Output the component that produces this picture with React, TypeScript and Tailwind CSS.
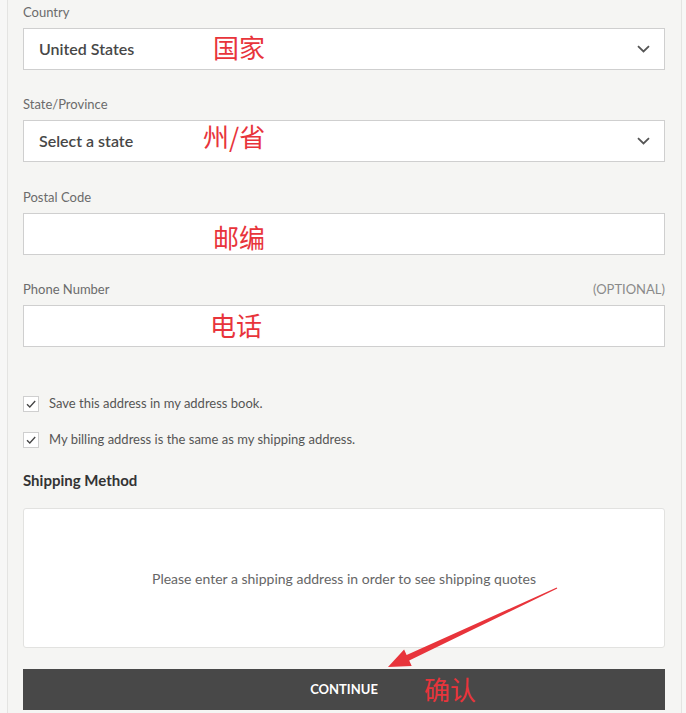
import React from 'react';

const labelCls = 'block text-[13px] leading-4 text-[#6b6b6b]';
const boxCls = 'h-[42px] w-full border border-[#cfcfcf] bg-white';

function Chevron() {
  return (
    <svg width="13" height="8" viewBox="0 0 13 8" fill="none" className="text-[#555]">
      <path d="M1 1.2 L6.5 6.5 L12 1.2" stroke="currentColor" strokeWidth="1.8" />
    </svg>
  );
}

function SelectField({ label, value, gap = 'mb-[26px]' }: { label: string; value: string; gap?: string }) {
  return (
    <div className={gap}>
      <label className={labelCls}>{label}</label>
      <div className={`${boxCls} mt-2 flex items-center justify-between pl-[15px] pr-[14px]`}>
        <span className="text-[16px] font-semibold text-[#474747]">{value}</span>
        <Chevron />
      </div>
    </div>
  );
}

function InputField({ label, optional }: { label: string; optional?: boolean }) {
  return (
    <div className="mb-[26px]">
      <div className="flex justify-between">
        <label className={labelCls}>{label}</label>
        {optional && <span className="text-[13px] leading-4 text-[#8a8a8a]">(OPTIONAL)</span>}
      </div>
      <div className={`${boxCls} mt-2`} />
    </div>
  );
}

function Check({ text }: { text: string }) {
  return (
    <div className="flex h-5 items-center gap-[10px]">
      <div className="flex h-4 w-4 items-center justify-center border border-[#cfcfcf] bg-white">
        <svg width="10" height="8" viewBox="0 0 10 8" fill="none">
          <path d="M1 4.2 L3.8 7 L9.2 1" stroke="#444" strokeWidth="1.3" />
        </svg>
      </div>
      <span className="text-[13px] text-[#555]">{text}</span>
    </div>
  );
}

const noteCls =
  'absolute text-[26px] leading-none text-[#e8343b] [font-family:"Noto_Sans_CJK_SC",sans-serif]';

export default function App() {
  return (
    <div className="relative h-[713px] w-[686px] overflow-hidden bg-[#f7f7f6] [font-family:Lato,'Liberation_Sans',sans-serif]">
      <div className="ml-[7px] h-full w-[675px] border-x border-[#e4e4e2] bg-[#f5f5f3] pl-[15px] pr-[16px] pt-[4px]">
        <SelectField label="Country" value="United States" />
        <SelectField label="State/Province" value="Select a state" gap="mb-[27px]" />
        <InputField label="Postal Code" />
        <InputField label="Phone Number" optional />

        <div className="mt-[47px] flex flex-col gap-4">
          <Check text="Save this address in my address book." />
          <Check text="My billing address is the same as my shipping address." />
        </div>

        <h3 className="mt-[22px] text-[15px] font-bold leading-4 text-[#333]">Shipping Method</h3>

        <div className="mt-[20px] flex h-[140px] items-center justify-center rounded-[3px] border border-[#e2e2e0] bg-white">
          <p className="text-[14px] text-[#666]">Please enter a shipping address in order to see shipping quotes</p>
        </div>

        <button className="mt-[21px] flex h-[41px] w-full items-center justify-center bg-[#484848] text-[13px] font-bold text-white">
          CONTINUE
        </button>
      </div>

      <span className={noteCls} style={{ left: 213, top: 34 }}>国家</span>
      <span className={noteCls} style={{ left: 203, top: 123 }}>州/省</span>
      <span className={noteCls} style={{ left: 213, top: 224 }}>邮编</span>
      <span className={noteCls} style={{ left: 210, top: 312 }}>电话</span>
      <span className={noteCls} style={{ left: 424, top: 676 }}>确认</span>

      <svg className="absolute left-0 top-0" width="686" height="713" viewBox="0 0 686 713">
        <polygon
          fill="#e8343b"
          points="557.3,588.5 409.2,660.4 411.7,665.9 388,667 404.1,649.5 406.6,655.0 556.7,587.5"
        />
      </svg>
    </div>
  );
}
